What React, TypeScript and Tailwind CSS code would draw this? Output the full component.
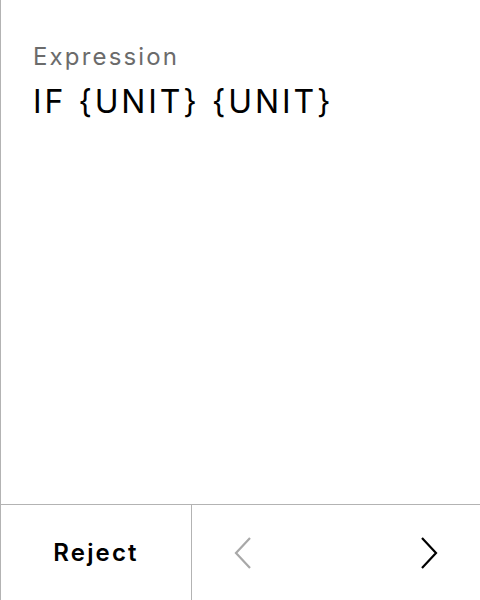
export default function App() {
  return (
    <div className="w-[480px] h-[600px] bg-white border-l border-[#b3b3b3] flex flex-col" style={{ fontFamily: 'Inter, "Noto Sans", sans-serif' }}>
      <div className="flex-1 pl-[32px] pt-[40px]">
        <div className="text-[24px] leading-[34px] tracking-[0.09em] text-[#6b6b6b]">Expression</div>
        <div className="mt-[8px] text-[32px] leading-[40px] tracking-[0.09em] text-black">IF {"{UNIT}"} {"{UNIT}"}</div>
      </div>
      <div className="h-[96px] border-t border-[#b3b3b3] flex">
        <div className="w-[191px] border-r border-[#b3b3b3] flex items-center justify-center text-[24px] font-semibold tracking-[0.09em] text-black">
          Reject
        </div>
        <div className="flex-1 flex items-center justify-between px-[42px]">
          <svg width="18" height="32" viewBox="0 0 18 32" fill="none">
            <polyline points="16,1 2,16 16,31" stroke="#a8a8a8" strokeWidth="2.2" />
          </svg>
          <svg width="18" height="32" viewBox="0 0 18 32" fill="none">
            <polyline points="2,1 16,16 2,31" stroke="#000" strokeWidth="2.2" />
          </svg>
        </div>
      </div>
    </div>
  );
}
